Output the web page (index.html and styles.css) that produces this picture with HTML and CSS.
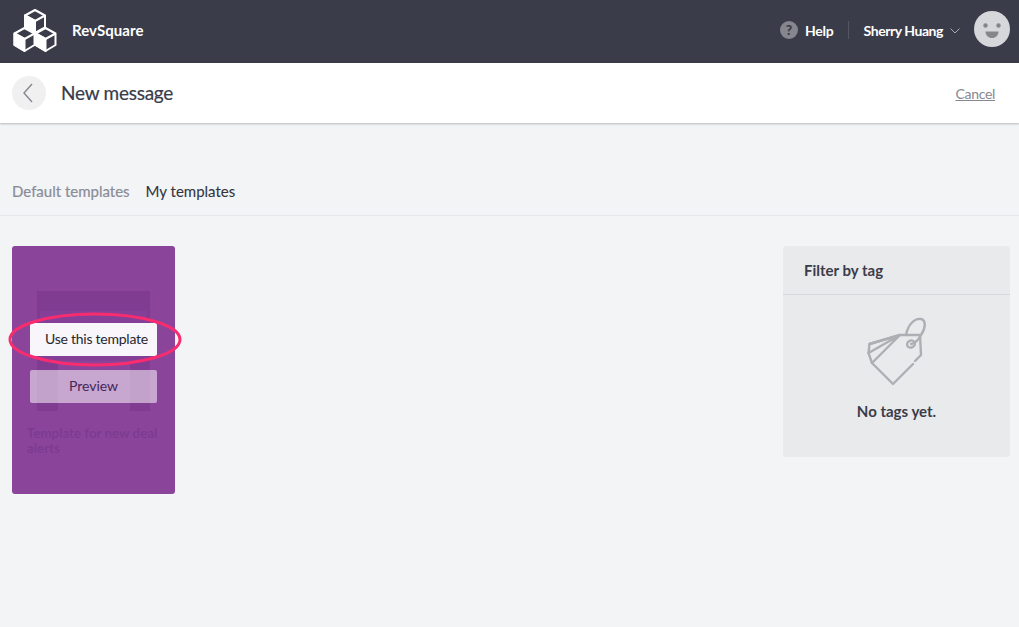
FILE: index.html
```html
<!DOCTYPE html>
<html lang="en">
<head>
<meta charset="utf-8">
<title>New message</title>
<link rel="stylesheet" href="styles.css">
</head>
<body>
<header class="topbar">
  <div class="brand">
    <svg class="logo" width="44" height="44" viewBox="0 0 44 44" fill="none" stroke="#fff" stroke-width="2" stroke-linejoin="round">
      <path d="M22 1 32 6.500v12L22 24 12 18.500V6.500z"/>
      <path d="M12 6.500 22 12 32 6.500"/>
      <path d="M12 6.500 22 12V24L12 18.500z" fill="#fff"/>
      <path d="M11.500 19 21.500 24.500V36L11.500 42 1.500 36V24.500z" fill="#3a3c4a"/>
      <path d="M1.500 24.500 11.500 30 21.500 24.500"/>
      <path d="M1.500 24.500 11.500 30V42L1.500 36z" fill="#fff"/>
      <path d="M32.500 19 42.500 24.500V36L32.500 42 22.500 36V24.500z" fill="#3a3c4a"/>
      <path d="M22.500 24.500 32.500 30 42.500 24.500"/>
      <path d="M22.500 24.500 32.500 30V42L22.500 36z" fill="#fff"/>
    </svg>
    <span class="brand-name">RevSquare</span>
  </div>
  <div class="top-actions">
    <span class="help-icon">?</span>
    <span class="top-link">Help</span>
    <span class="divider"></span>
    <span class="top-link top-name">Sherry Huang</span>
    <svg class="caret" width="10" height="6" viewBox="0 0 10 6" fill="none" stroke="#a9abb3" stroke-width="1"><path d="M.5.500 5 5 9.500.5"/></svg>
    <svg class="avatar" width="36" height="36" viewBox="0 0 36 36">
      <circle cx="18" cy="18" r="18" fill="#d6d7db"/>
      <circle cx="11.500" cy="14.500" r="2.200" fill="#85868c"/>
      <circle cx="24.500" cy="14.500" r="2.200" fill="#85868c"/>
      <path d="M11.500 20.500h13c0 4-3 6.500-6.500 6.500s-6.500-2.500-6.500-6.500z" fill="#85868c"/>
    </svg>
  </div>
</header>

<div class="subbar">
  <div class="subbar-left">
    <span class="back">
      <svg width="10" height="20" viewBox="0 0 10 20" fill="none" stroke="#85878f" stroke-width="1.400"><path d="M9 1 1 10l8 9"/></svg>
    </span>
    <h1 class="title">New message</h1>
  </div>
  <a class="cancel" href="#">Cancel</a>
</div>

<nav class="tabs">
  <span class="tab tab-muted">Default templates</span>
  <span class="tab tab-active">My templates</span>
</nav>

<main class="content">
  <section class="card">
    <div class="ghost-sheet">
      <div class="ghost-top"></div>
      <div class="ghost-bottom"></div>
    </div>
    <p class="ghost-caption">Template for new deal alerts</p>
    <div class="card-actions">
      <button class="btn btn-primary">Use this template</button>
      <button class="btn btn-secondary">Preview</button>
    </div>
    <svg class="annotation" width="174" height="55" viewBox="0 0 174 55" fill="none">
      <ellipse cx="87" cy="27.500" rx="85" ry="25.500" stroke="#f92c70" stroke-width="3"/>
    </svg>
  </section>

  <aside class="filter">
    <h2 class="filter-title">Filter by tag</h2>
    <div class="filter-body">
      <svg class="tag-icon" width="62" height="72" viewBox="0 0 62 72" fill="none" stroke="#aeafb5" stroke-width="2.400" stroke-linejoin="round" stroke-linecap="round">
        <path d="M46 48 26 68 5 47 1.500 37 2.500 28 33 19h20l1 20-6 6"/>
        <path d="M2.500 28 33 19 1.500 37M33 19 5 47"/>
        <ellipse cx="44" cy="28" rx="4" ry="3.500" transform="rotate(-25 44 28)"/>
        <path d="M39 19C41 8 48 2 54 3c5 1 5 9 0 16-2 4-5 8-10 9"/>
      </svg>
      <p class="no-tags">No tags yet.</p>
    </div>
  </aside>
</main>
</body>
</html>
```

FILE: styles.css
```css
* {
  box-sizing: border-box;
}

html, body {
  margin: 0;
  padding: 0;
}

body {
  min-height: 627px;
  background: #f3f4f6;
  font-family: Lato, "Liberation Sans", sans-serif;
  color: #3a3c4a;
  overflow: hidden;
}

.topbar {
  height: 63px;
  background: #3a3c4a;
  display: flex;
  align-items: center;
  justify-content: space-between;
  padding: 0 9px 5px 13px;
}

.brand {
  display: flex;
  align-items: center;
  gap: 15px;
}

.logo {
  display: block;
  margin-top: 4px;
}

.brand-name {
  color: #fff;
  font-size: 15px;
  font-weight: 700;
  letter-spacing: 0.05px;
  margin-top: 2px;
}

.top-actions {
  display: flex;
  align-items: center;
}

.help-icon {
  width: 18px;
  height: 18px;
  border-radius: 50%;
  background: #85868e;
  color: #3a3c4a;
  font-size: 14px;
  font-weight: 900;
  line-height: 18px;
  text-align: center;
  margin-right: 7px;
  margin-top: 2px;
}

.top-link {
  color: #fff;
  font-size: 14px;
  font-weight: 700;
  letter-spacing: -0.2px;
  margin-top: 2px;
}

.top-name {
  letter-spacing: -0.45px;
}

.divider {
  width: 1px;
  height: 18px;
  background: #555662;
  margin: 2px 15px 0 14px;
}

.caret {
  margin: 3px 14px 0 7px;
}

.avatar {
  display: block;
}

.subbar {
  height: 60px;
  background: #fff;
  box-shadow: 0 1px 2px rgba(0, 0, 0, 0.25);
  display: flex;
  align-items: center;
  justify-content: space-between;
  padding: 0 24px 0 12px;
}

.subbar-left {
  display: flex;
  align-items: center;
  gap: 15px;
}

.back {
  width: 34px;
  height: 34px;
  border-radius: 50%;
  background: #f0f0f1;
  display: flex;
  align-items: center;
  justify-content: center;
  padding-right: 3px;
}

.title {
  margin: 0 0 1px;
  font-size: 19px;
  font-weight: 400;
  letter-spacing: -0.25px;
  color: #3a3c4a;
  -webkit-text-stroke: 0.2px #3a3c4a;
}

.cancel {
  color: #85878f;
  font-size: 14px;
  letter-spacing: -0.3px;
  text-decoration: underline;
}

.tabs {
  margin-top: 57px;
  height: 36px;
  padding: 0 12px;
  display: flex;
  gap: 16px;
  border-bottom: 1px solid #e6e7ea;
  font-size: 15px;
}

.tab {
  line-height: 22px;
}

.tab-muted {
  color: #8a8c96;
  -webkit-text-stroke: 0.2px currentColor;
}

.tab-active {
  color: #33343f;
  -webkit-text-stroke: 0.1px currentColor;
}

.content {
  display: flex;
  align-items: flex-start;
  justify-content: space-between;
  padding: 30px 9px 0 12px;
}

.card {
  position: relative;
  width: 163px;
  height: 248px;
  border-radius: 3px;
  background: #8a459b;
}

.ghost-sheet {
  position: absolute;
  left: 25px;
  top: 45px;
  width: 113px;
  height: 120px;
  background: #7f3c91;
  padding-top: 20px;
  display: flex;
  flex-direction: column;
  align-items: center;
}

.ghost-top {
  width: 107px;
  height: 50px;
  background: #844097;
}

.ghost-bottom {
  width: 72px;
  height: 50px;
  background: #8a459b;
}

.ghost-caption {
  position: absolute;
  left: 15px;
  top: 180px;
  width: 140px;
  margin: 0;
  font-size: 13.300px;
  line-height: 15px;
  font-weight: 700;
  color: #7d3b90;
}

.card-actions {
  position: absolute;
  left: 18px;
  top: 77px;
  width: 127px;
  display: flex;
  flex-direction: column;
  gap: 14px;
}

.btn {
  height: 33px;
  border: 0;
  border-radius: 2px;
  font-family: inherit;
  font-size: 14px;
  padding: 0 0 2px;
}

.btn-primary {
  background: #f8f6fa;
  color: #26272f;
  text-align: left;
  padding-left: 15px;
  letter-spacing: -0.25px;
  white-space: nowrap;
}

.btn-secondary {
  background: rgba(255, 255, 255, 0.52);
  color: #43265a;
  text-align: center;
}

.annotation {
  position: absolute;
  left: -4px;
  top: 66px;
}

.filter {
  width: 227px;
  height: 211px;
  border-radius: 3px;
  background: #e9eaec;
}

.filter-title {
  margin: 0;
  height: 49px;
  padding: 0 21px;
  border-bottom: 1px solid #d8d9dc;
  font-size: 15px;
  line-height: 48px;
  font-weight: 700;
  color: #3a3c4a;
}

.filter-body {
  display: flex;
  flex-direction: column;
  align-items: center;
  padding-top: 21px;
}

.tag-icon {
  display: block;
  margin-left: 3px;
}

.no-tags {
  margin: 13px 0 0;
  font-size: 15px;
  line-height: 20px;
  font-weight: 700;
  color: #3a3c4a;
}
```
